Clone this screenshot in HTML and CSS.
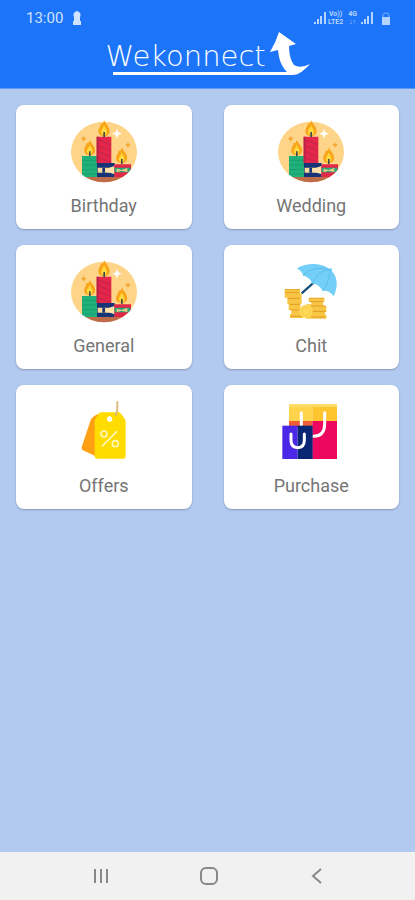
FILE: index.html
```html
<!DOCTYPE html>
<html lang="en">
<head>
    <meta charset="utf-8">
    <meta name="viewport" content="width=device-width, initial-scale=1">
    <title>Wekonnect</title>
    <link rel="stylesheet" href="styles.css">
</head>
<body>
    <!-- Shared candle drawing -->
    <svg class="symbols" aria-hidden="true">
        <clipPath id="candleClip">
            <ellipse cx="132" cy="126" rx="99" ry="91"/>
        </clipPath>
        <symbol id="flame" viewBox="0 0 36 52">
            <path d="M18 0C22 10 35 20 35 33C35 43 28 48 18 48S1 43 1 33C1 24 8 20 9 10C15 13 18 6 18 0Z" fill="#f9a51a"/>
            <path d="M18 16C21 24 27 28 27 36C27 42 23 45 18 45S9 42 9 36C9 29 16 25 18 16Z" fill="#ffd83d"/>
            <path d="M16 36h5v16h-5z" fill="#3e4a4a"/>
        </symbol>
        <symbol id="candles" viewBox="30 30 204 192">
            <g clip-path="url(#candleClip)">
                <path d="M30 30h204v192H30z" fill="#fdd488"/>
                <path d="M30 201h204v20H30z" fill="#bd6b48"/>
                <path d="M66 138h48v63H66z" fill="#20b17b"/>
                <path d="M66 151h45M66 165h45M66 179h45M66 192h45" stroke="#149568" stroke-width="2"/>
                <path d="M110 80h44v80h-44z" fill="#e5264b"/>
                <path d="M110 80h6v80h-6z" fill="#b82348"/>
                <path d="M112 88l40 16M112 106l40 16M112 124l40 16M112 142l40 16" stroke="#bd244b" stroke-width="3"/>
                <path d="M111 159h53v42h-53z" fill="#173477"/>
                <path d="M113 173h51v15h-51z" fill="#f8d99a"/>
                <path d="M127 173h8v15h-8z" fill="#173477"/>
                <path d="M138 177l25-9v25l-25-9z" fill="#ffe3aa"/>
                <path d="M163 163h50v38h-50z" fill="#df2947"/>
                <path d="M164 173h47v14h-47z" fill="#28a579"/>
                <path d="M170 176l14 4 18-6v12l-18-4-14 5z" fill="#e6cb86"/>
            </g>
            <path d="M171 56l4 11 11 4-11 4-4 11-4-11-11-4 11-4z" fill="#fff"/>
            <path d="M71 77l3 6 6 3-6 3-3 6-3-6-6-3 6-3zM204 97l3 5 6 3-6 3-3 5-3-5-6-3 6-3z" fill="#f5a633"/>
            <use href="#flame" x="114" y="30" width="36" height="52"/>
            <use href="#flame" x="71" y="89" width="36" height="50"/>
            <use href="#flame" x="167" y="112" width="36" height="51"/>
        </symbol>
    </svg>

    <header class="header">
        <div class="status-bar">
            <span class="time">13:00</span>
            <svg class="chess" viewBox="0 0 10 14" fill="currentColor" aria-hidden="true">
                <path d="M5 0a4 4 0 0 1 3 6v4h1v4H1v-4h1V6a4 4 0 0 1 3-6Z"/>
            </svg>
            <div class="status-icons">
                <svg class="signal" viewBox="0 0 12 12" fill="currentColor" aria-hidden="true">
                    <path d="M0 10h2v2H0zM3 7h2v5H3zM6 4h2v8H6zM10 0h2v12h-2z"/>
                </svg>
                <span class="network">Vo))<br>LTE2</span>
                <span class="network data">4G<br>↓↑</span>
                <svg class="signal" viewBox="0 0 12 12" fill="currentColor" aria-hidden="true">
                    <path d="M0 10h2v2H0zM3 7h2v5H3zM6 4h2v8H6zM10 0h2v12h-2z"/>
                </svg>
                <svg class="lock" viewBox="0 0 10 13" aria-hidden="true">
                    <path d="M2 6V3a3 2 0 0 1 6 0v3" fill="none" stroke="currentColor" opacity=".6"/>
                    <path d="M1 5h8v8H1z" fill="currentColor"/>
                </svg>
            </div>
        </div>
        <div class="brand">
            <h1>Wekonnect</h1>
            <svg class="arrow" viewBox="0 0 204 44" fill="#fff" aria-hidden="true">
                <path d="M7 40H181C175 34 173 27 172 18L164 20Q170 10 173 0L190 12L183 14C183 22 185 29 188 33Q194 37 204 32C198 38 194 43 186 43H7Z"/>
            </svg>
        </div>
    </header>

    <main class="menu">
        <a class="card" href="#birthday">
            <svg class="icon" aria-hidden="true"><use href="#candles"/></svg>
            <span>Birthday</span>
        </a>
        <a class="card" href="#wedding">
            <svg class="icon" aria-hidden="true"><use href="#candles"/></svg>
            <span>Wedding</span>
        </a>
        <a class="card" href="#general">
            <svg class="icon" aria-hidden="true"><use href="#candles"/></svg>
            <span>General</span>
        </a>
        <a class="card" href="#chit">
            <svg class="icon" viewBox="24 30 204 192" aria-hidden="true">
                <path d="M98 130l38-34" stroke="#174e78" stroke-width="7"/>
                <path d="M84 55C119 35 158 41 181 56L188 54L189 64C207 83 207 113 194 139C184 126 172 121 161 123C153 107 142 101 130 101C124 85 113 79 103 77C99 66 93 61 84 55Z" fill="#73cff8"/>
                <path d="M184 60C159 58 139 76 130 101M184 60C181 86 175 105 161 123M184 60C151 49 120 56 103 77" fill="none" stroke="#52b4e9" stroke-width="2"/>
                <path d="M47 117h46v13h5v31h-4v12h9v31H63v-12h4v-12h-8v-17h-4v-20h-8z" fill="#f8c544"/>
                <path d="M119 143h47v14h-4v10h10v19h-4v8h4v12h-61v-43h16v-9h-8z" fill="#f8c544"/>
                <path d="M48 128h40M57 145h36M63 163h31M64 180h32M64 199h36M120 155h42M126 168h43M128 184h42M128 201h41" stroke="#e49c28" stroke-width="3"/>
                <path d="M48 119h44M120 145h44" stroke="#e8ab34" stroke-width="3"/>
                <circle cx="111" cy="184" r="20" fill="#ffd957"/>
                <circle cx="111" cy="184" r="13" fill="none" stroke="#f2c03c" stroke-width="2"/>
            </svg>
            <span>Chit</span>
        </a>
        <a class="card" href="#offers">
            <svg class="icon" viewBox="30 30 204 192" aria-hidden="true">
                <path d="M104 77L119 70L130 201L104 197L69 181Q63 178 65 172L92 90Q95 82 104 77Z" fill="#ff9f13"/>
                <path d="M122 67h53q5 0 8 4l11 15q3 4 3 9v103q0 8-8 8h-77q-8 0-8-8V94q0-5 3-9l9-13q3-5 6-5z" fill="#ffdc00"/>
                <circle cx="149" cy="87" r="8" fill="#fff"/>
                <path d="M167 75q5-8 5-18V36" fill="none" stroke="#dcb980" stroke-width="6" stroke-linecap="round"/>
                <path d="M127 168l43-43" stroke="#fff7bb" stroke-width="5" stroke-linecap="round"/>
                <circle cx="132" cy="132" r="9" fill="none" stroke="#fff7bb" stroke-width="5"/>
                <circle cx="166" cy="161" r="9" fill="none" stroke="#fff7bb" stroke-width="5"/>
            </svg>
            <span>Offers</span>
        </a>
        <a class="card" href="#purchase">
            <svg class="icon" viewBox="24 30 204 192" aria-hidden="true">
                <path d="M60 43h70v50H60z" fill="#ffd34a"/>
                <path d="M130 43h74v50h-74z" fill="#ffc52f"/>
                <path d="M60 43h144v8H60z" fill="#ffdc67"/>
                <path d="M60 93h70v20H60z" fill="#f15c39"/>
                <path d="M130 93h74v114h-74z" fill="#ed075e"/>
                <path d="M97 68v39M167 68v34q0 37-34 37" fill="none" stroke="#fff" stroke-width="9" stroke-linecap="round"/>
                <path d="M40 107h46v100H40z" fill="#4b28e8"/>
                <path d="M86 107h45v100H86z" fill="#092675"/>
                <path d="M66 132v19q0 22 20 22t20-22v-19" fill="none" stroke="#fff" stroke-width="9" stroke-linecap="round"/>
            </svg>
            <span>Purchase</span>
        </a>
    </main>

    <!-- System navigation -->
    <nav class="nav-bar">
        <button aria-label="Recent apps">
            <svg viewBox="0 0 20 20" aria-hidden="true"><path d="M4 3v14M10 3v14M16 3v14"/></svg>
        </button>
        <button aria-label="Home">
            <svg viewBox="0 0 20 20" aria-hidden="true"><rect x="2" y="2" width="16" height="16" rx="5"/></svg>
        </button>
        <button aria-label="Back">
            <svg viewBox="0 0 20 20" aria-hidden="true"><path d="M14 3l-8 7 8 7"/></svg>
        </button>
    </nav>
</body>
</html>
```
FILE: styles.css
```css
* {
    box-sizing: border-box;
}

body {
    display: flex;
    flex-direction: column;
    min-height: 100vh;
    margin: 0;
    font-family: Roboto, sans-serif;
    background-color: #b2caf0;
}

.symbols {
    position: absolute;
    width: 0;
    height: 0;
}

.header {
    padding: 8px 24px 12px;
    color: #fff;
    background-color: #1c74f8;
    border-bottom: 1px solid #5c99f7;
}

.status-bar {
    display: flex;
    align-items: center;
    height: 20px;
    padding-left: 2px;
    color: #cee3ff;
}

.time {
    font-size: 15px;
}

.chess {
    width: 10px;
    height: 14px;
    margin-left: 9px;
}

.status-icons {
    display: flex;
    align-items: center;
    gap: 2px;
    margin-left: auto;
    color: #b4d3ff;
}

.signal {
    width: 12px;
    height: 12px;
}

.network {
    font-size: 7px;
    font-weight: bold;
    line-height: 8px;
    text-align: center;
}

.data {
    margin: 0 2px 0 3px;
}

.lock {
    width: 10px;
    height: 13px;
    margin-left: 6px;
}

.brand {
    position: relative;
    width: 204px;
    height: 48px;
    margin: 0 auto;
}

.brand h1 {
    margin: 0;
    padding-top: 14px;
    font-family: "DejaVu Sans", sans-serif;
    font-size: 29px;
    font-weight: 200;
    line-height: 28px;
}

.arrow {
    position: absolute;
    top: 4px;
    left: 0;
    width: 204px;
    height: 44px;
}

.menu {
    display: grid;
    flex: 1;
    grid-template-columns: 1fr 1fr;
    align-content: start;
    gap: 16px 32px;
    padding: 16px;
}

.card {
    display: flex;
    flex-direction: column;
    align-items: center;
    gap: 8px;
    padding: 15px 8px 9px;
    color: #757575;
    font-size: 18px;
    line-height: 28px;
    text-decoration: none;
    background-color: #fff;
    border-radius: 8px;
    box-shadow: 0 1px 2px rgba(0, 0, 0, 0.25);
}

.icon {
    width: 68px;
    height: 64px;
}

.nav-bar {
    display: flex;
    justify-content: center;
    gap: 68px;
    height: 48px;
    padding-left: 2px;
    background-color: #f1f1f1;
}

.nav-bar button {
    display: flex;
    align-items: center;
    justify-content: center;
    width: 40px;
    padding: 0;
    background: none;
    border: none;
    cursor: pointer;
}

.nav-bar svg {
    width: 20px;
    height: 20px;
    fill: none;
    stroke: #888;
    stroke-width: 2;
}
```
